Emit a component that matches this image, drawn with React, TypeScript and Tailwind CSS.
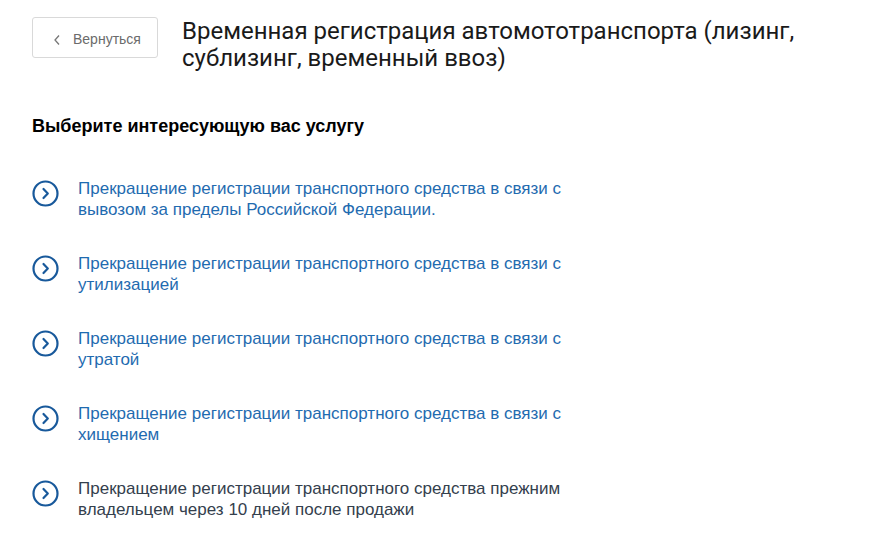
import React from "react";

const services = [
  { text: "Прекращение регистрации транспортного средства в связи с вывозом за пределы Российской Федерации.", active: false },
  { text: "Прекращение регистрации транспортного средства в связи с утилизацией", active: false },
  { text: "Прекращение регистрации транспортного средства в связи с утратой", active: false },
  { text: "Прекращение регистрации транспортного средства в связи с хищением", active: false },
  { text: "Прекращение регистрации транспортного средства прежним владельцем через 10 дней после продажи", active: true },
];

function CircleArrow() {
  return (
    <svg width="27" height="27" viewBox="0 0 27 27" fill="none" className="mt-[2px] shrink-0">
      <circle cx="13.5" cy="13.5" r="12" stroke="#18599b" strokeWidth="2.2" />
      <path d="M11.5 9 L15.8 13.5 L11.5 18" stroke="#18599b" strokeWidth="2.2" strokeLinecap="round" strokeLinejoin="round" />
    </svg>
  );
}

export default function App() {
  return (
    <div className="min-h-[559px] w-[893px] bg-white font-['Liberation_Sans',Arial,sans-serif]">
      <div className="flex items-start pl-8 pt-[17px]">
        <button className="flex h-[41px] w-[126px] items-center gap-[12px] rounded-[3px] border border-[#d9d9d9] bg-white pl-[20px] pt-[4px] text-[14px] text-[#6b6b6b]">
          <svg width="8" height="12" viewBox="0 0 8 12" fill="none">
            <path d="M6 1.5 L2 6 L6 10.5" stroke="#777" strokeWidth="1.3" />
          </svg>
          <span>Вернуться</span>
        </button>
        <h1 className="ml-6 mt-[1px] w-[640px] font-['Roboto',sans-serif] text-[24px] leading-[27px] text-[#1a1a1a]">
          Временная регистрация автомототранспорта (лизинг, сублизинг, временный ввоз)
        </h1>
      </div>

      <div className="pl-8 pt-[44px]">
        <h2 className="text-[18px] font-bold leading-[20px] text-black">Выберите интересующую вас услугу</h2>

        <ul className="mt-[42px] flex flex-col gap-[33px]">
          {services.map((s) => (
            <li key={s.text} className="flex items-start gap-[19px]">
              <CircleArrow />
              <span
                className={
                  "w-[520px] text-[17px] leading-[21px] " +
                  (s.active ? "text-[#34404d]" : "text-[#1f6bb0]")
                }
              >
                {s.text}
              </span>
            </li>
          ))}
        </ul>
      </div>
    </div>
  );
}
